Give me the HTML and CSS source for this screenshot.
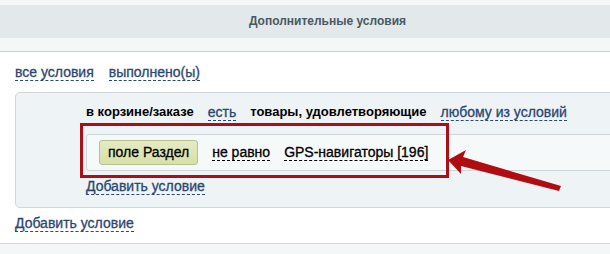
FILE: index.html
```html
<!DOCTYPE html>
<html lang="ru">

<head>
    <meta charset="UTF-8">
    <meta name="viewport" content="width=device-width, initial-scale=1.0">
    <title>Дополнительные условия</title>
    <link rel="stylesheet" href="styles.css">
</head>

<body>

    <div class="header">
        <div class="title">Дополнительные условия</div>
    </div>

    <div class="content">
        <div class="links">
            <span class="link">все условия</span>
            <span class="link">выполнено(ы)</span>
        </div>

        <div class="box">
            <div class="line">
                <span class="text">в корзине/заказе</span>
                <span class="link">есть</span>
                <span class="text">товары, удовлетворяющие</span>
                <span class="link">любому из условий</span>
            </div>
            <div class="row">
                <span class="btn">поле Раздел</span>
                <span class="link dark">не равно</span>
                <span class="link dark">GPS-навигаторы [196]</span>
            </div>
            <div class="add">
                <span class="link">Добавить условие</span>
            </div>
        </div>

        <div class="add outer">
            <span class="link">Добавить условие</span>
        </div>
    </div>

    <div class="footer"></div>

    <!-- annotation -->
    <div class="mark"></div>
    <svg class="arrow" width="130" height="50" viewBox="440 145 130 50">
        <polygon points="448,160 466,150 463,157 561,186 559,191 461,166 461,174" fill="#b00d12" />
    </svg>

</body>

</html>
```

FILE: styles.css
```css
* {
    margin: 0;
    padding: 0;
    box-sizing: border-box;
}

body {
    background-color: white;
    font-family: "Liberation Sans", Arial, sans-serif;
    font-size: 14px;
    color: #000;
    overflow: hidden;
    position: relative;
    height: 254px;
}

.header {
    background-color: #f4f7f8;
    padding: 5px 0 13px;
    border-bottom: 1px solid #c9d0d3;
}

.title {
    background-color: #e3e8ea;
    height: 33px;
    line-height: 33px;
    text-align: center;
    padding-left: 45px;
    font-size: 12px;
    font-weight: bold;
    color: #4a5960;
}

.content {
    padding-left: 15px;
}

.links {
    display: flex;
    gap: 15px;
    margin-top: 12px;
}

.link {
    display: inline-block;
    line-height: 16px;
    color: #2b4770;
    border-bottom: 1px dashed #2b4770;
    -webkit-text-stroke: 0.3px #2b4770;
}

.link.dark {
    color: #000;
    border-bottom-color: #000;
    -webkit-text-stroke: 0.3px #000;
}

.text {
    display: inline-block;
    line-height: 16px;
    font-size: 13px;
    font-weight: bold;
}

.box {
    margin-top: 11px;
    margin-right: -30px;
    background-color: #eef3f5;
    border: 1px solid #cfd7db;
    border-radius: 5px;
    padding: 11px 0 12px 70px;
}

.line {
    display: flex;
    gap: 14px;
}

.row {
    display: flex;
    align-items: center;
    gap: 14px;
    margin-top: 13px;
    height: 37px;
    padding-left: 12px;
    background-color: #f6f9fa;
    border: 1px solid #cfd6d9;
    border-radius: 3px;
}

.btn {
    display: inline-block;
    height: 25px;
    line-height: 23px;
    padding: 0 8px;
    background: linear-gradient(#e5ebc3, #d7e0a7);
    border: 1px solid #b7c08e;
    border-radius: 3px;
    -webkit-text-stroke: 0.3px #000;
}

.add {
    margin-top: 7px;
}

.add.outer {
    margin-top: 7px;
}

.footer {
    margin-top: 11px;
    height: 20px;
    background-color: #f4f7f8;
    border-top: 1px solid #d0d6d9;
}

.mark {
    position: absolute;
    left: 80px;
    top: 123px;
    width: 369px;
    height: 55px;
    border: 3px solid #a80f16;
}

.arrow {
    position: absolute;
    left: 440px;
    top: 145px;
}
```
